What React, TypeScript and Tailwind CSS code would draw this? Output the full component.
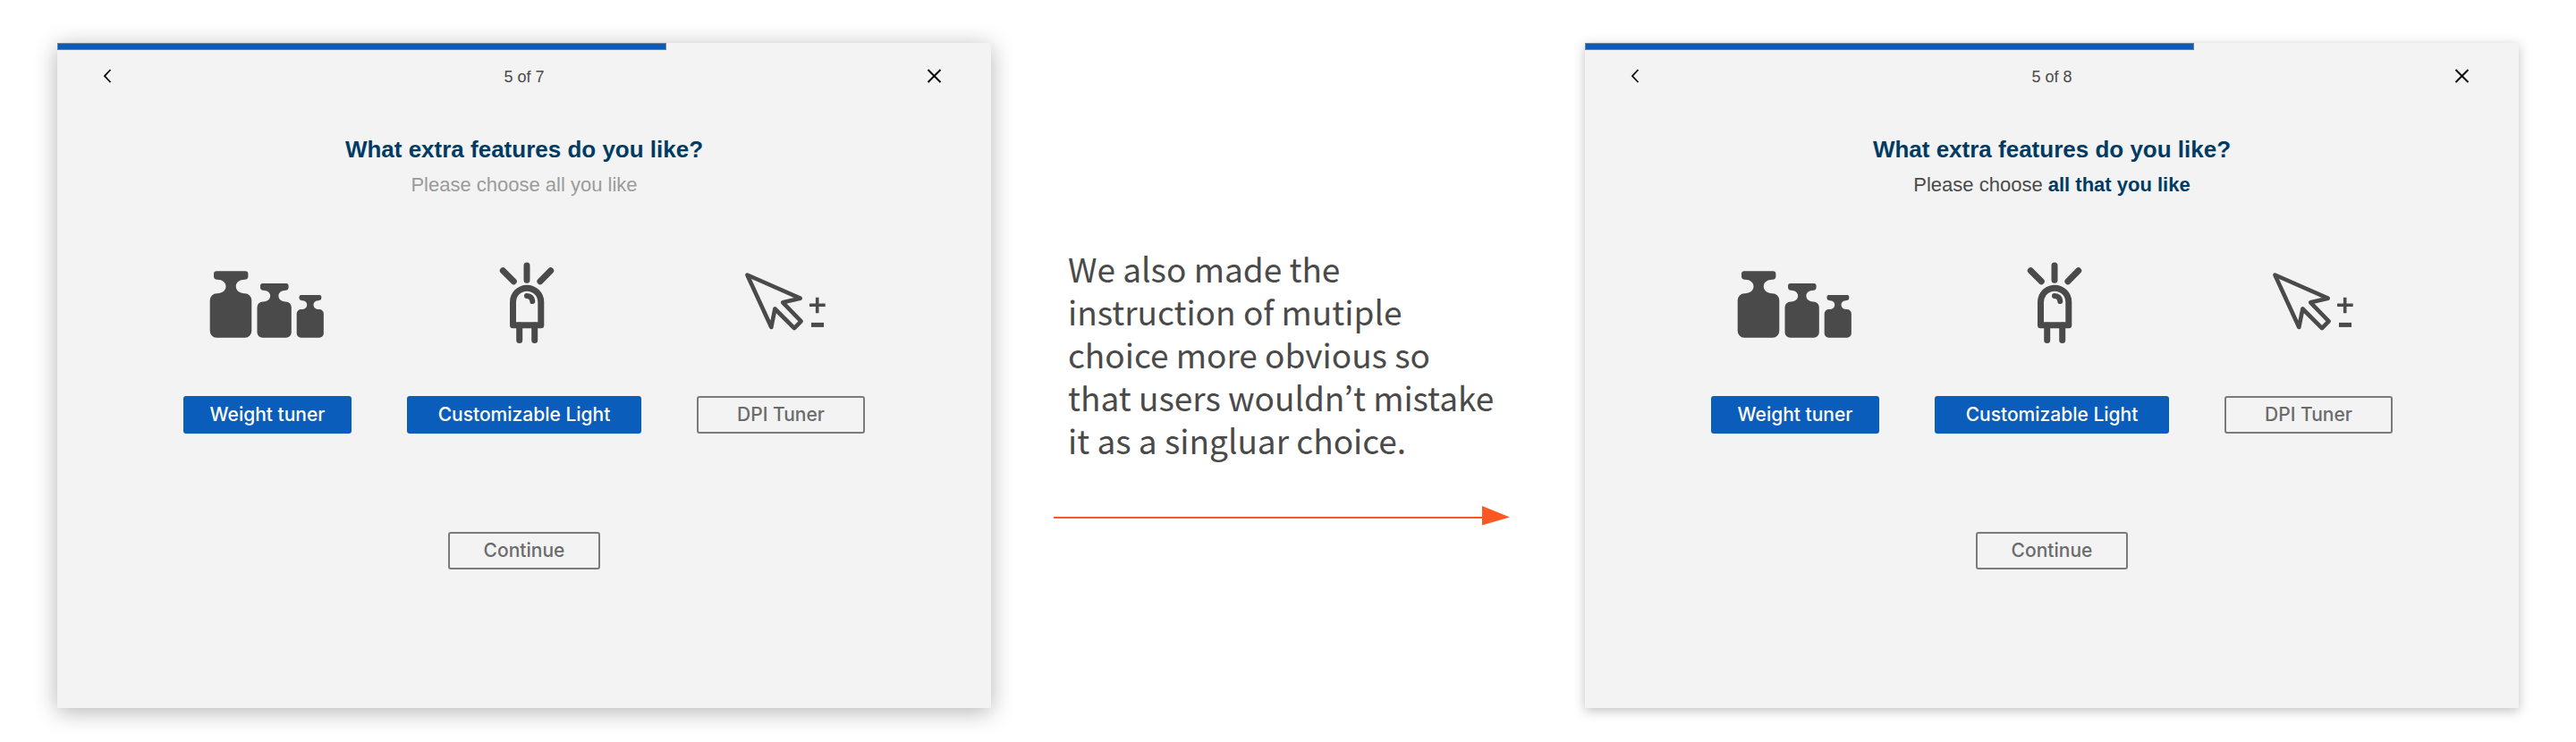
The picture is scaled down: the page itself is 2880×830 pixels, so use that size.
import type { ReactNode } from "react";

function WeightsIcon() {
  const weight =
    "M7.5 0H39.5a3.2 3.2 0 0 1 3.2 3.2V5.6a3.8 3.8 0 0 1-3.8 3.8C33 9.6 29.1 12.4 29.1 17c0 4.7 3.9 7.7 9.5 8H39a7.6 7.6 0 0 1 7.6 7.6V67a7.4 7.4 0 0 1-7.4 7.4H7.4A7.4 7.4 0 0 1 0 67V32.6A7.6 7.6 0 0 1 7.6 25H8C14 24.7 17.8 21.7 17.8 17C17.8 12.4 14 9.6 8.1 9.4A3.8 3.8 0 0 1 4.3 5.6V3.2A3.2 3.2 0 0 1 7.5 0Z";
  return (
    <svg viewBox="0 0 188 92" className="h-[92px] w-[188px] fill-[#4a4a4a]" aria-hidden="true">
      <path d={weight} transform="translate(29.7 10.3)" />
      <path d={weight} transform="translate(82.5 24) scale(.822 .817)" />
      <path d={weight} transform="translate(126.7 37) scale(.647 .642)" />
    </svg>
  );
}

function LedIcon() {
  return (
    <svg
      viewBox="0 0 188 92"
      className="h-[92px] w-[188px] fill-none stroke-[#4a4a4a]"
      strokeWidth="7"
      strokeLinecap="round"
      strokeLinejoin="round"
      aria-hidden="true"
    >
      <path d="M97 4V20.2M70.3 9.7L82.3 21.7M123.7 9.7L111.9 21.7" />
      <path d="M81.5 70.8V44.9a15.65 15.65 0 0 1 31.3 0V70.8Z" />
      <path d="M88.7 71V87.5M105.7 71V87.5" />
      <path d="M97 37.9Q103 38.2 103.3 44" strokeWidth="6" />
    </svg>
  );
}

function PointerIcon() {
  return (
    <svg
      viewBox="0 0 188 92"
      className="h-[92px] w-[188px] fill-none stroke-[#4a4a4a]"
      strokeWidth="4.6"
      strokeLinejoin="round"
      aria-hidden="true"
    >
      <path d="M56.4 14.5L115.7 40.7L96.2 45.3L116.6 66.4L109 74.1L87.4 52.5L83.3 73Z" />
      <path d="M126 48.3H143.7M134.7 39.7V57.3" strokeWidth="3.6" />
      <path d="M128 70.4H142" strokeWidth="5" />
    </svg>
  );
}

type Feature = { label: string; icon: ReactNode; selected: boolean; width: string };

const features: Feature[] = [
  { label: "Weight tuner", icon: <WeightsIcon />, selected: true, width: "w-[188px]" },
  { label: "Customizable Light", icon: <LedIcon />, selected: true, width: "w-[262px]" },
  { label: "DPI Tuner", icon: <PointerIcon />, selected: false, width: "w-[188px]" },
];

const buttonText = "font-['Inter','Liberation_Sans',sans-serif] text-[21px] leading-6 font-medium whitespace-nowrap";
const outlined = "border-2 border-[#7a7a7a] text-[#6b6b6b]";
const filled = "bg-[#0a5dba] text-white";

function QuizCard({ step, hint, shadow }: { step: string; hint: ReactNode; shadow: string }) {
  return (
    <section className={`flex flex-col items-center bg-[#f3f3f3] pb-[155px] ${shadow}`}>
      <div className="h-2 w-full">
        <div className="h-full w-[65.2%] border border-[#6f8193] bg-[#0a5dba]" />
      </div>
      <header className="mt-[18px] flex w-full items-center justify-between px-12 text-[18px] leading-6 text-[#4a4a4a]">
        <button type="button" aria-label="Back" className="flex size-6 items-center justify-center">
          <svg viewBox="0 0 24 24" className="size-6 fill-none stroke-black" strokeWidth="1.8">
            <path d="M11.5 4L5 11L11.5 18" />
          </svg>
        </button>
        <p>{step}</p>
        <button type="button" aria-label="Close" className="flex size-6 items-center justify-center">
          <svg viewBox="0 0 24 24" className="size-6 fill-none stroke-black" strokeWidth="2">
            <path d="M1.5 4L15.5 18M15.5 4L1.5 18" />
          </svg>
        </button>
      </header>
      <h2 className="mt-[53px] text-[26px] leading-8 font-bold text-[#003b64]">What extra features do you like?</h2>
      <p className="mt-2 text-[22px] leading-8">{hint}</p>
      <div className="mt-[70px] flex justify-center gap-[62px]">
        {features.map((f) => (
          <div key={f.label} className="flex flex-col items-center gap-[58px]">
            {f.icon}
            <button
              type="button"
              aria-pressed={f.selected}
              className={`h-[42px] rounded-[3px] ${f.width} ${buttonText} ${f.selected ? filled : outlined}`}
            >
              {f.label}
            </button>
          </div>
        ))}
      </div>
      <button type="button" className={`mt-[110px] h-[42px] w-[170px] rounded-[3px] ${buttonText} ${outlined}`}>
        Continue
      </button>
    </section>
  );
}

export default function App() {
  return (
    <main className="grid grid-cols-[1044fr_664fr_1044fr] items-start bg-white px-16 pt-12 pb-9 font-['Liberation_Sans',Arial,sans-serif]">
      <QuizCard
        step="5 of 7"
        shadow="shadow-[0_4px_24px_rgba(0,0,0,0.3)]"
        hint={<span className="text-[#9b9b9b]">Please choose all you like</span>}
      />
      <div className="pt-[228px] pr-[84px] pl-[70px]">
        <p className="w-[496px] pl-4 font-['Noto_Sans_CJK_KR',sans-serif] text-[37px] leading-[48px] text-[#4a4a4a]">
          We also made the instruction of mutiple choice more obvious so that users wouldn’t mistake it as a singluar choice.
        </p>
        <div className="mt-[50px] flex items-center text-[#ff5722]">
          <div className="h-[2px] grow bg-current" />
          <svg viewBox="0 0 31 25" className="h-[25px] w-[31px] fill-current" aria-hidden="true">
            <path d="M0 0L31 12.5L0 21.5Z" />
          </svg>
        </div>
      </div>
      <QuizCard
        step="5 of 8"
        shadow="shadow-[0_3px_12px_rgba(0,0,0,0.25)]"
        hint={
          <span className="text-[#4a4a4a]">
            Please choose <strong className="font-bold text-[#003b64]">all that you like</strong>
          </span>
        }
      />
    </main>
  );
}
